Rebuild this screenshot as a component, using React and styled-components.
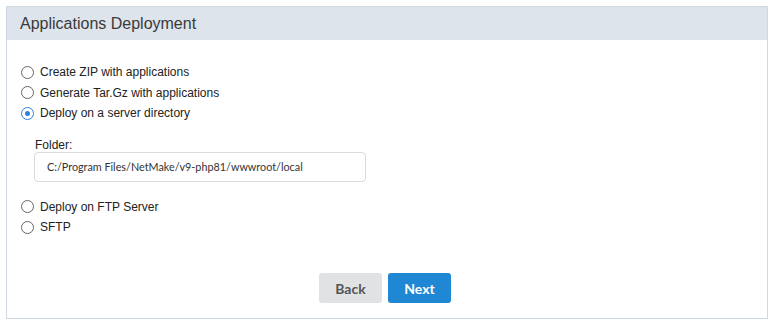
import React, { useState } from 'react'
import styled, { createGlobalStyle, css } from 'styled-components'

const GlobalStyle = createGlobalStyle`
  html, body {
    margin: 0;
    padding: 0;
    background: #fff;
  }
  body {
    font-family: "Liberation Sans", Arial, sans-serif;
    color: #333;
  }
`

const Page = styled.div`
  padding: 6px 4px 6px 6px;
`

const Panel = styled.div`
  width: 760px;
  height: 311px;
  border: 1px solid #cfd8e1;
  display: flex;
  flex-direction: column;
  box-sizing: content-box;
`

const Header = styled.div`
  background: #dde4ec;
  height: 33px;
  display: flex;
  align-items: center;
  padding-left: 13px;
  font-size: 16px;
  color: #3a3a3a;
`

const Body = styled.div`
  flex: 1;
  display: flex;
  flex-direction: column;
  padding: 22px 14px 0 14px;
`

const RadioRow = styled.label`
  display: flex;
  align-items: center;
  height: 20.5px;
  font-size: 12px;
  color: #222;
  cursor: pointer;
`

const RadioDot = styled.span`
  width: 13px;
  height: 13px;
  box-sizing: border-box;
  border-radius: 50%;
  border: 1.6px solid #666;
  margin-right: 6px;
  display: flex;
  align-items: center;
  justify-content: center;

  ${props => props.checked && css`
    border-color: #2f7fd6;
    &::after {
      content: '';
      width: 5px;
      height: 5px;
      border-radius: 50%;
      background: #2f7fd6;
    }
  `}
`

const FolderBlock = styled.div`
  display: flex;
  flex-direction: column;
  padding: 14px 0 15px 13px;
`

const FolderLabel = styled.div`
  font-size: 12px;
  line-height: 14px;
  color: #222;
  padding-left: 1px;
`

const FolderInput = styled.div`
  width: 332px;
  height: 30px;
  box-sizing: border-box;
  border: 1px solid #dcdcdc;
  border-radius: 4px;
  display: flex;
  align-items: center;
  padding-left: 12px;
  font-family: Lato, "Liberation Sans", sans-serif;
  font-size: 10.8px;
  color: #333;
`

const Footer = styled.div`
  display: flex;
  justify-content: center;
  gap: 6px;
  padding: 0 4px 15px 0;
`

const Button = styled.button`
  width: 63px;
  height: 30px;
  border: none;
  border-radius: 3px;
  font-family: Lato, "Liberation Sans", sans-serif;
  font-weight: 700;
  font-size: 14px;
  background: #e1e2e4;
  color: #555;
  cursor: pointer;

  ${props => props.primary && css`
    background: #1f87d3;
    color: #fff;
  `}
`

const options = [
  'Create ZIP with applications',
  'Generate Tar.Gz with applications',
  'Deploy on a server directory',
]

const moreOptions = ['Deploy on FTP Server', 'SFTP']

export default function App() {
  const [selected, setSelected] = useState('Deploy on a server directory')

  const radio = label => (
    <RadioRow key={label} onClick={() => setSelected(label)}>
      <RadioDot checked={selected === label} />
      {label}
    </RadioRow>
  )

  return (
    <Page>
      <GlobalStyle />
      <Panel>
        <Header>Applications Deployment</Header>
        <Body>
          {options.map(radio)}
          <FolderBlock>
            <FolderLabel>Folder:</FolderLabel>
            <FolderInput>C:/Program Files/NetMake/v9-php81/wwwroot/local</FolderInput>
          </FolderBlock>
          {moreOptions.map(radio)}
        </Body>
        <Footer>
          <Button>Back</Button>
          <Button primary>Next</Button>
        </Footer>
      </Panel>
    </Page>
  )
}
